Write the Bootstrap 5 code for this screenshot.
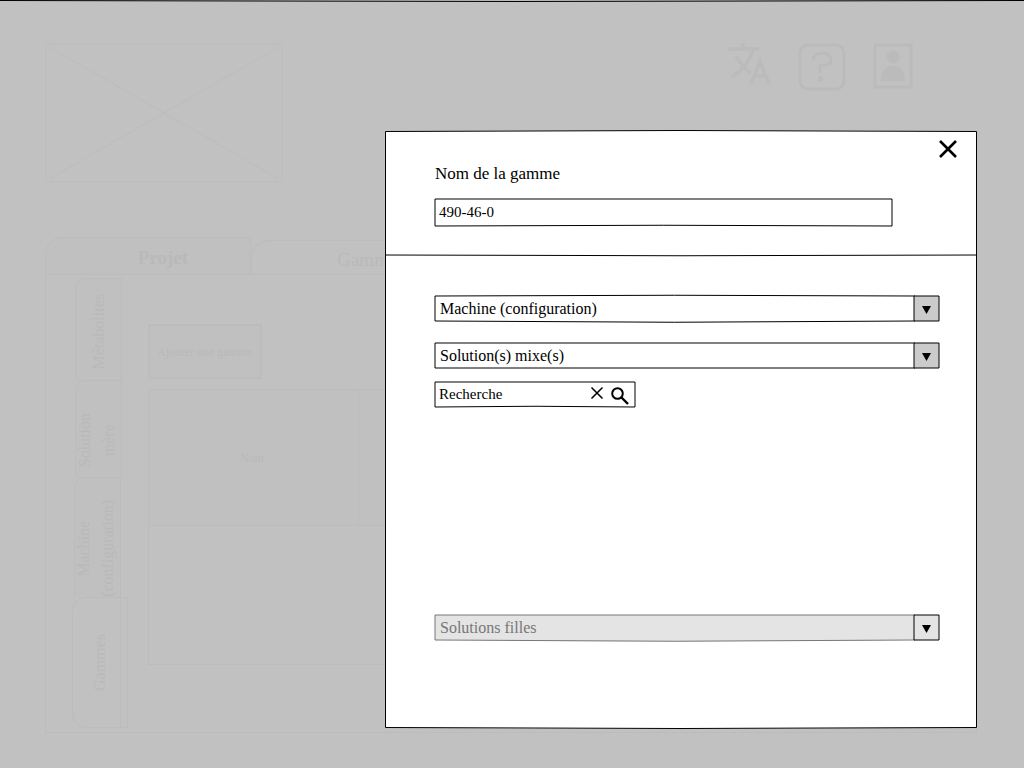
<!DOCTYPE html>
<html lang="fr">
<head>
<meta charset="utf-8">
<meta name="viewport" content="width=device-width, initial-scale=1">
<title>Gammes</title>
<link href="https://cdn.jsdelivr.net/npm/bootstrap@5.3.0/dist/css/bootstrap.min.css" rel="stylesheet">
<style>
:root {
  --ghost: #bcbcbc;
  --ghost-fill: #c0c0c0;
  --arrow: url("data:image/svg+xml,%3Csvg xmlns='http://www.w3.org/2000/svg' viewBox='0 0 27 29'%3E%3Cpath d='M1 2H26V27H1Z' fill='%23cbcbcb' stroke='%23000'/%3E%3Cpath d='M9 12H18L13.500 20Z'/%3E%3C/svg%3E");
  --arrow-off: url("data:image/svg+xml,%3Csvg xmlns='http://www.w3.org/2000/svg' viewBox='0 0 27 29'%3E%3Cpath d='M1 2H26V27H1Z' fill='%23e4e4e4' stroke='%23000'/%3E%3Cpath d='M9 12H18L13.500 20Z'/%3E%3C/svg%3E");
}
body {
  font-family: "Liberation Serif", serif;
  font-size: 16px;
  line-height: 24px;
  color: #000;
  background: #c1c1c1 url("data:image/svg+xml,%3Csvg xmlns='http://www.w3.org/2000/svg' viewBox='0 0 1024 3' preserveAspectRatio='none'%3E%3Cpath d='M0 .5Q512 2.500 1024 .5' fill='none' stroke='%23000'/%3E%3C/svg%3E") top / 100% 3px no-repeat;
}
/* page behind the dialog */
.backpage { min-height: 100vh; padding: 43px 47px 35px 45px; color: #b9b9b9; }
.logo-box { width: 238px; height: 140px; }
.tools { gap: 27px; padding-right: 64px; }
.tabs-row { margin-top: 54px; }
.tab-top { height: 37px; border: 1px solid var(--ghost); border-bottom: 0; border-radius: 18px 0 0 0; font-size: 19px; background: var(--ghost-fill); width: 206px; padding: 4px 0 0 0; color: inherit; }
.tab-first { padding-left: 30px; }
.tab-active { background: none; width: 240px; height: 34px; }
.sheet { border: 1px solid var(--ghost); min-height: 459px; padding: 3px 0 4px 26px; }
.side { width: 57px; }
.tab-side { width: 47px; margin-left: 3px; border: 1px solid var(--ghost); border-bottom: 0; border-radius: 10px 0 0 0; background: var(--ghost-fill); padding: 4px 0 0; color: inherit; overflow: hidden; }
.tab-side span { writing-mode: vertical-rl; transform: rotate(180deg); white-space: nowrap; text-align: center; }
.h-a { height: 102px; } .h-b { height: 97px; } .h-c { height: 120px; }
.h-b, .h-c { padding: 22px 4px 0 0; }
.tab-side.h-c { margin-left: 2px; }
.tab-open { width: 56px; height: 131px; margin-left: 0; padding: 0; border: 1px solid var(--ghost); border-radius: 14px 0 0 14px; background: none; }
.rail { width: 7px; border-left: 1px solid var(--ghost); }
.work { padding: 46px 75px 0 19px; font-size: 12px; }
.btn-ghost { width: 114px; height: 55px; border: 2px solid var(--ghost); background: var(--ghost-fill); color: inherit; padding: 0; }
.grid-ghost { margin-top: 10px; height: 276px; border: 1px solid var(--ghost); color: inherit; }
.grid-ghost th { height: 136px; border: 1px solid var(--ghost); background: var(--ghost-fill); font-weight: 400; text-align: center; vertical-align: middle; padding-right: 4px; }
.grid-ghost th:first-child { width: 210px; }
/* dialog */
.layer { padding: 130px 47px 39px 16px; }
.panel {
  max-width: 592px; min-height: 599px;
  background: url("data:image/svg+xml,%3Csvg xmlns='http://www.w3.org/2000/svg' viewBox='0 0 592 599' preserveAspectRatio='none'%3E%3Cpath d='M.5 1.500Q296 -.5 591.500 1.500V597.500Q296 599.500 .5 597.500Z' fill='%23fff' stroke='%23000'/%3E%3C/svg%3E") center / 100% 100% no-repeat;
}
.panel-head {
  height: 127px; padding: 8px 84px 0 49px;
  background: url("data:image/svg+xml,%3Csvg xmlns='http://www.w3.org/2000/svg' viewBox='0 0 592 3' preserveAspectRatio='none'%3E%3Cpath d='M0 1Q296 2.500 592 1' fill='none' stroke='%23000'/%3E%3C/svg%3E") bottom / 100% 3px no-repeat;
}
.close-x { top: 8px; right: 18px; }
.bare { border: 0; background: none; padding: 0; line-height: 0; color: #000; }
.name-label { font-size: 17px; margin-top: 24px; margin-bottom: 12px; padding-left: 1px; }
.sketch { height: 29px; border: 0; border-radius: 0; color: #000; appearance: none; background: none; }
.name-input {
  font-size: 15px; padding: 0 5px;
  background: url("data:image/svg+xml,%3Csvg xmlns='http://www.w3.org/2000/svg' viewBox='0 0 459 29' preserveAspectRatio='none'%3E%3Cpath d='M1 1H458V28Q229 26.500 1 28Z' fill='%23fff' stroke='%23000'/%3E%3C/svg%3E") center / 100% 100% no-repeat;
}
.panel-body { padding: 37px 37px 86px 49px; }
.pick { padding: 0 30px 0 6px; }
.pick-a { background: var(--arrow) right / 27px 29px no-repeat, url("data:image/svg+xml,%3Csvg xmlns='http://www.w3.org/2000/svg' viewBox='0 0 506 29' preserveAspectRatio='none'%3E%3Cpath d='M1 2Q240 .5 481 2V27Q240 29.500 1 27Z' fill='%23fff' stroke='%23000'/%3E%3C/svg%3E") center / 100% 100% no-repeat; margin-bottom: 18px; }
.pick-b { background: var(--arrow) right / 27px 29px no-repeat, url("data:image/svg+xml,%3Csvg xmlns='http://www.w3.org/2000/svg' viewBox='0 0 506 29' preserveAspectRatio='none'%3E%3Cpath d='M1 2H481V27H1Z' fill='%23fff' stroke='%23000'/%3E%3C/svg%3E") center / 100% 100% no-repeat; margin-bottom: 10px; }
.pick-c { opacity: 1; color: #777; background: var(--arrow-off) right / 27px 29px no-repeat, url("data:image/svg+xml,%3Csvg xmlns='http://www.w3.org/2000/svg' viewBox='0 0 506 29' preserveAspectRatio='none'%3E%3Cpath d='M1 2H481V27Q240 29.500 1 27Z' fill='%23e4e4e4' stroke='%23777'/%3E%3C/svg%3E") center / 100% 100% no-repeat; margin-top: 204px; }
.finder {
  width: 202px; height: 29px; padding: 0 7px 0 5px; gap: 7px;
  background: url("data:image/svg+xml,%3Csvg xmlns='http://www.w3.org/2000/svg' viewBox='0 0 202 29' preserveAspectRatio='none'%3E%3Cpath d='M1 2H201V27Q101 25.500 1 27Z' fill='%23fff' stroke='%23000'/%3E%3C/svg%3E") center / 100% 100% no-repeat;
}
.finder input { min-width: 0; font-size: 15px; padding: 0; }
.finder input::placeholder { color: #000; opacity: 1; }
</style>
</head>
<body>
<div class="position-relative overflow-hidden">
  <div class="backpage" aria-hidden="true">
    <header class="d-flex justify-content-between align-items-start">
      <svg class="logo-box" viewBox="0 0 238 140" fill="none" stroke="#bcbcbc"><path d="M1 1H237V139H1ZM4 4L234 136M234 4L4 136"/></svg>
      <div class="tools d-flex">
        <svg width="44" height="44" viewBox="0 0 44 44" fill="none" stroke="#bbb" stroke-width="3.500"><path d="M1 6H32M16 0V6M26 7C23 17 16 27 5 34M9 13C13 20 18 26 24 30"/><path d="M24 41L33 18L42 41M27 33H39"/></svg>
        <svg width="48" height="48" viewBox="0 0 48 48" fill="none" stroke="#bbb" stroke-width="3"><rect x="2" y="2" width="44" height="44" rx="8"/><path d="M15 17C16 8 33 8 33 17C33 22 29 22 24 22Q22 22 22 25V30"/><circle cx="22.500" cy="36" r="3" fill="#bbb" stroke="none"/></svg>
        <svg width="40" height="47" viewBox="0 0 40 47" fill="#bbb"><path d="M2 2H38V44H2Z" fill="none" stroke="#bbb" stroke-width="3"/><circle cx="20" cy="14" r="6.500"/><path d="M8 36C8 18 32 18 32 36Q32 38 30 38H10Q8 38 8 36Z"/></svg>
      </div>
    </header>
    <div class="tabs-row d-flex align-items-end">
      <button class="tab-top tab-first fw-bold" tabindex="-1">Projet</button>
      <button class="tab-top tab-active" tabindex="-1">Gammes</button>
    </div>
    <div class="sheet d-flex">
      <div class="side d-flex flex-column">
        <button class="tab-side h-a d-flex align-items-center justify-content-center" tabindex="-1"><span>Métabolites</span></button>
        <button class="tab-side h-b d-flex align-items-center justify-content-center" tabindex="-1"><span>Solution<br>mère</span></button>
        <button class="tab-side h-c d-flex align-items-center justify-content-center" tabindex="-1"><span>Machine<br>(configuration)</span></button>
        <button class="tab-side tab-open d-flex align-items-stretch justify-content-end" tabindex="-1"><span class="me-2 pe-1">Gammes</span><i class="rail"></i></button>
      </div>
      <div class="work flex-grow-1">
        <button class="btn-ghost" tabindex="-1">Ajouter une gamme</button>
        <table class="grid-ghost w-100">
          <thead><tr><th>Nom</th><th></th></tr></thead>
          <tbody><tr><td></td><td></td></tr></tbody>
        </table>
      </div>
    </div>
  </div>

  <div class="layer position-absolute top-0 start-0 w-100 h-100 d-flex justify-content-end align-items-start">
    <section class="panel position-relative w-100" role="dialog" aria-label="Gamme">
      <div class="panel-head">
        <button class="bare close-x position-absolute" aria-label="Fermer"><svg width="22" height="22" viewBox="0 0 22 22" stroke="#000" stroke-width="2.600"><path d="M3 3L19 19M19 3L3 19"/></svg></button>
        <label class="name-label d-block" for="nom">Nom de la gamme</label>
        <input class="sketch name-input d-block w-100" id="nom" type="text" value="490-46-0">
      </div>
      <div class="panel-body">
        <select class="sketch pick pick-a d-block w-100" aria-label="Machine"><option>Machine (configuration)</option></select>
        <select class="sketch pick pick-b d-block w-100" aria-label="Solutions mixes"><option>Solution(s) mixe(s)</option></select>
        <form class="finder d-flex align-items-center" role="search">
          <input class="sketch flex-grow-1" type="text" placeholder="Recherche" aria-label="Recherche">
          <button class="bare" type="reset" aria-label="Effacer"><svg width="14" height="18" viewBox="0 0 14 18" stroke="#000" stroke-width="1.500"><path d="M1.500 1.500L12.500 12.500M12.500 1.500L1.500 12.500"/></svg></button>
          <button class="bare" type="submit" aria-label="Rechercher"><svg width="18" height="20" viewBox="0 0 18 20" fill="none" stroke="#000" stroke-width="2"><circle cx="6.500" cy="8.500" r="5.300"/><path d="M10.500 12.500L17 19" stroke-width="2.400"/></svg></button>
        </form>
        <select class="sketch pick pick-c d-block w-100" aria-label="Solutions filles" disabled><option>Solutions filles</option></select>
      </div>
    </section>
  </div>
</div>
<script src="https://cdn.jsdelivr.net/npm/bootstrap@5.3.0/dist/js/bootstrap.bundle.min.js"></script>
</body>
</html>
